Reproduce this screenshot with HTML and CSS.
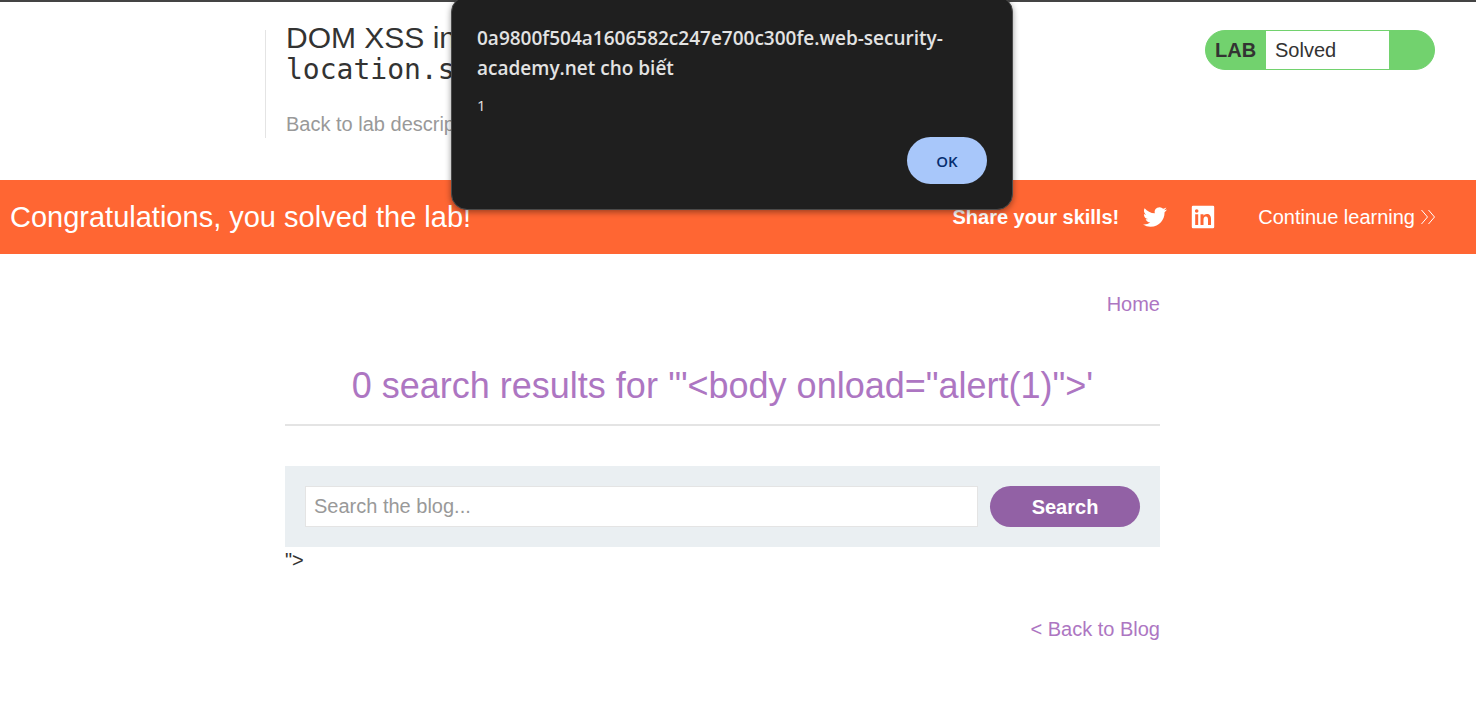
FILE: index.html
```html
<!DOCTYPE html>
<html lang="en">
<head>
<meta charset="utf-8">
<title>DOM XSS lab</title>
<link rel="stylesheet" href="styles.css">
</head>
<body>
<header class="lab-header">
  <div class="title-container">
    <h2 class="lab-title">DOM XSS in <br><code>location.search</code></h2>
    <a class="lab-back" href="#">Back to lab description</a>
  </div>
  <div class="lab-status">
    <span class="lab-status-label">LAB</span>
    <p class="lab-status-text">Solved</p>
    <span class="lab-status-icon"></span>
  </div>
</header>
<section class="banner">
  <h4 class="banner-message">Congratulations, you solved the lab!</h4>
  <div class="banner-links">
    <span class="share-label">Share your skills!</span>
    <a class="share-link" href="#" aria-label="Share on Twitter">
      <svg class="share-icon" viewBox="0 0 24 24" fill="currentColor"><path d="M23.953 4.57a10 10 0 01-2.825.775 4.958 4.958 0 002.163-2.723c-.951.555-2.005.959-3.127 1.184a4.92 4.92 0 00-8.384 4.482C7.69 8.095 4.067 6.13 1.64 3.162a4.822 4.822 0 00-.666 2.475c0 1.71.87 3.213 2.188 4.096a4.904 4.904 0 01-2.228-.616v.06a4.923 4.923 0 003.946 4.827 4.996 4.996 0 01-2.212.085 4.936 4.936 0 004.604 3.417 9.867 9.867 0 01-6.102 2.105c-.39 0-.779-.023-1.17-.067a13.995 13.995 0 007.557 2.209c9.053 0 13.998-7.496 13.998-13.985 0-.21 0-.42-.015-.63A9.935 9.935 0 0024 4.59z"/></svg>
    </a>
    <a class="share-link" href="#" aria-label="Share on LinkedIn">
      <svg class="share-icon" viewBox="0 0 24 24" fill="currentColor"><path fill-rule="evenodd" d="M2 .8h20a1.200 1.200 0 0 1 1.200 1.200v20a1.200 1.200 0 0 1-1.200 1.200H2A1.200 1.200 0 0 1 .8 22V2A1.200 1.200 0 0 1 2 .8zM4.200 9.300V20h3V9.300zM5.700 4.200a1.800 1.800 0 1 0 0 3.600 1.800 1.800 0 0 0 0-3.600zM9.500 9.300V20h3v-5.300c0-1.500.6-3.100 2.300-3.100s2.200 1.400 2.200 3.200V20h3v-5.900c0-3-1.200-5.100-4.200-5.100-1.600 0-2.700.8-3.300 1.700V9.300z"/></svg>
    </a>
    <a class="continue-link" href="#">Continue learning
      <svg class="chevrons" viewBox="0 0 14 16" fill="none" stroke="currentColor"><path d="M.5 1l6 7-6 7M7.500 1l6 7-6 7"/></svg>
    </a>
  </div>
</section>
<main class="content">
  <nav class="home-nav"><a class="link" href="#">Home</a></nav>
  <h1 class="results-title">0 search results for '"&lt;body onload="alert(1)"&gt;'</h1>
  <form class="search">
    <input class="search-input" type="text" placeholder="Search the blog..." aria-label="Search the blog">
    <button class="search-button" type="button">Search</button>
  </form>
  <div class="stray-text">"&gt;</div>
  <div class="back-row"><a class="link" href="#">&lt; Back to Blog</a></div>
</main>
<dialog class="alert" open aria-labelledby="alert-title">
  <h3 class="alert-title" id="alert-title" lang="vi">0a9800f504a1606582c247e700c300fe.web-security-academy.net cho biết</h3>
  <p class="alert-text">1</p>
  <div class="alert-actions"><button class="alert-ok" type="button">OK</button></div>
</dialog>
</body>
</html>
```
FILE: styles.css
```css
* { box-sizing: border-box; }
body {
  margin: 0;
  border-top: 2px solid #444;
  background: #fff;
  color: #333332;
  font: 20px/24px "Liberation Sans", Arial, sans-serif;
}
a { text-decoration: none; }
.lab-header {
  display: flex;
  justify-content: space-between;
  align-items: flex-start;
  padding: 28px 41px 42px 265px;
}
.title-container {
  border-left: 1px solid #e4e4e4;
  padding-left: 20px;
  height: 108px;
}
.lab-title {
  margin: -8px 0 27px;
  font-size: 30px;
  font-weight: 400;
  line-height: 31px;
}
.lab-title code { font: 28px/31px "DejaVu Sans Mono", monospace; }
.lab-back { color: #999; }
.lab-status {
  display: flex;
  width: 230px;
  height: 40px;
  border: 1px solid #72d26e;
  border-radius: 20px;
  background: #72d26e;
  overflow: hidden;
  line-height: 38px;
}
.lab-status-label { width: 60px; padding-left: 9px; font-weight: 700; }
.lab-status-text { flex: 1; margin: 0; padding-left: 9px; background: #fff; }
.lab-status-icon { width: 45px; }
.banner {
  display: flex;
  justify-content: space-between;
  align-items: center;
  height: 74px;
  padding: 0 41px 0 10px;
  background: #ff6633;
  color: #fff;
}
.banner-message { margin: 0; font-size: 29px; font-weight: 400; }
.banner-links { display: flex; align-items: center; }
.share-label { font-weight: 700; margin-right: 24px; }
.share-link { display: flex; margin-right: 24px; color: #fff; }
.share-icon { width: 24px; height: 24px; }
.continue-link { display: flex; align-items: center; gap: 6px; margin-left: 19px; color: #fff; }
.chevrons { width: 14px; height: 16px; }
.content { padding: 38px 316px 0 285px; }
.link { color: #ad76c2; }
.home-nav, .back-row { text-align: right; }
.results-title {
  margin: 0;
  padding: 48px 0 16px;
  border-bottom: 2px solid #e4e4e4;
  color: #ad76c2;
  font-size: 36px;
  font-weight: 400;
  line-height: 44px;
  text-align: center;
}
.search {
  display: flex;
  gap: 12px;
  margin-top: 40px;
  padding: 20px;
  background: #eaeff2;
}
.search-input {
  flex: 1;
  min-width: 0;
  height: 41px;
  padding: 0 8px;
  border: 1px solid #e4e4e4;
  background: #fff;
  font: inherit;
}
.search-input::placeholder { color: #999; }
.search-button {
  width: 150px;
  height: 41px;
  border: 0;
  border-radius: 21px;
  background: #9261a5;
  color: #fff;
  font: inherit;
  font-weight: 700;
}
.stray-text { margin: 1px 0 45px; }
.alert {
  position: absolute;
  top: -4px;
  left: 451px;
  width: 562px;
  height: 214px;
  margin: 0;
  padding: 26px 25px;
  border: 1px solid #4a4a4a;
  border-radius: 16px;
  background: #1f1f1f;
  box-shadow: 0 2px 6px rgba(0, 0, 0, .4);
  color: #e3e3e3;
  font-family: "Open Sans", "Noto Sans", sans-serif;
}
.alert-title { margin: 0; font-size: 19px; font-weight: 600; line-height: 30px; }
.alert-text { margin: 10px 0 20px; font-size: 15px; line-height: 24px; }
.alert-actions { display: flex; justify-content: flex-end; }
.alert-ok {
  width: 80px;
  height: 47px;
  border: 0;
  border-radius: 24px;
  background: #a8c7fa;
  color: #062e6f;
  font: 600 15px/24px "Open Sans", "Noto Sans", sans-serif;
}
```
